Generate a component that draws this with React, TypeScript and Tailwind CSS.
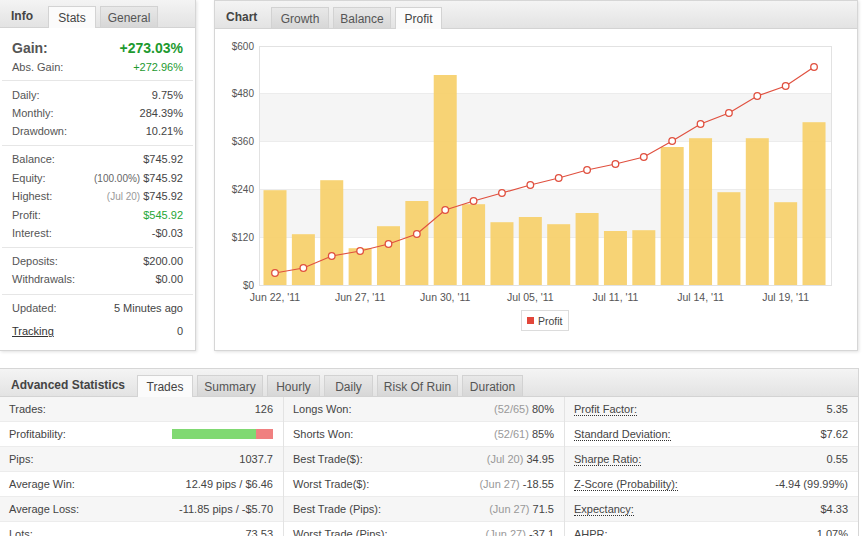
import React from "react";

const font = { fontFamily: '"Liberation Sans", Arial, sans-serif' };

type TabProps = { label: string; active?: boolean; w: string };

const Tab = ({ label, active, w }: TabProps) => (
  <div
    className={
      active
        ? `${w} h-[22px] -mb-px pt-[1px] flex items-center justify-center bg-[#fbfbfb] border border-b-0 border-[#d3d3d3] text-[12px] text-[#444]`
        : `${w} h-[21px] pt-[1px] flex items-center justify-center bg-linear-to-b from-[#e8e8e8] to-[#d7d7d7] border border-b-0 border-[#d2d2d2] text-[12px] text-[#555]`
    }
  >
    {label}
  </div>
);

const Header = ({ title, tw, children }: { title: string; tw: string; children: React.ReactNode }) => (
  <div className="h-[28px] flex items-end bg-linear-to-b from-[#f4f4f4] to-[#e3e3e3] border-b border-[#d3d3d3]">
    <div className={`${tw} h-full flex items-center pt-[5px] pl-[11px] font-bold text-[12px] text-[#444]`}>{title}</div>
    <div className="flex gap-[4px]">{children}</div>
  </div>
);

const Row = ({ label, children, h = "h-[18px]", big }: { label: React.ReactNode; children: React.ReactNode; h?: string; big?: boolean }) => (
  <div className={`${h} flex items-center justify-between`}>
    <span className={big ? "text-[14px] font-bold text-[#555]" : "text-[11px] text-[#555]"}>{label}</span>
    <span className={big ? "text-[14px] font-bold" : "text-[11px] text-[#444]"}>{children}</span>
  </div>
);

const Sep = () => <div className="mx-[2px] h-px bg-[#e6e6e6]" />;

const InfoPanel = () => (
  <div className="w-[196px] h-[351px] bg-white border border-l-0 border-t-0 border-[#d6d6d6] shadow-[1px_1px_3px_rgba(0,0,0,0.12)]">
    <Header title="Info" tw="w-[48px]">
      <Tab label="Stats" active w="w-[48px]" />
      <Tab label="General" w="w-[58px]" />
    </Header>
    <div className="px-[12px] pt-[10px] pb-[4px]">
      <Row label="Gain:" h="h-[20px]" big>
        <span className="text-[#1d9a2f]">+273.03%</span>
      </Row>
      <Row label="Abs. Gain:">
        <span className="text-[#1d9a2f]">+272.96%</span>
      </Row>
    </div>
    <Sep />
    <div className="px-[12px] py-[5px]">
      <Row label="Daily:">9.75%</Row>
      <Row label="Monthly:">284.39%</Row>
      <Row label="Drawdown:">10.21%</Row>
    </div>
    <Sep />
    <div className="px-[12px] pt-[4px] pb-[4px]">
      <Row label="Balance:" h="h-[18.5px]">$745.92</Row>
      <Row label="Equity:" h="h-[18.5px]">
        <span className="text-[10px] text-[#666]">(100.00%)</span> $745.92
      </Row>
      <Row label="Highest:" h="h-[18.5px]">
        <span className="text-[10px] text-[#999]">(Jul 20)</span> $745.92
      </Row>
      <Row label="Profit:" h="h-[18.5px]">
        <span className="text-[#25a636]">$545.92</span>
      </Row>
      <Row label="Interest:" h="h-[18.5px]">-$0.03</Row>
    </div>
    <Sep />
    <div className="px-[12px] py-[5px]">
      <Row label="Deposits:">$200.00</Row>
      <Row label="Withdrawals:">$0.00</Row>
    </div>
    <Sep />
    <div className="px-[12px] pt-[5px] flex flex-col gap-[5px]">
      <Row label="Updated:">5 Minutes ago</Row>
      <Row label={<span className="underline text-[#333]">Tracking</span>}>0</Row>
    </div>
  </div>
);

const bars = [237, 127, 262, 92, 147, 210, 525, 202, 157, 170, 152, 180, 135, 137, 345, 367, 232, 367, 207, 407];
const line = [273, 268, 256, 251, 244, 234, 210, 201, 193, 185, 178, 170, 164, 157, 141, 124, 113, 96, 86, 67];
const cx = (i: number) => 275 + i * 28.37;
const ticks = [
  { v: "$600", y: 46 },
  { v: "$480", y: 93 },
  { v: "$360", y: 141 },
  { v: "$240", y: 189 },
  { v: "$120", y: 237 },
  { v: "$0", y: 285 },
];
const xlabels = ["Jun 22, '11", "Jun 27, '11", "Jun 30, '11", "Jul 05, '11", "Jul 11, '11", "Jul 14, '11", "Jul 19, '11"];

const ProfitChart = () => (
  <svg width={642} height={321} viewBox="215 29 642 321" className="block" style={font}>
    <rect x={259} y={46} width={572} height={239} fill="#fff" />
    <rect x={259} y={93} width={572} height={48} fill="#f5f5f5" />
    <rect x={259} y={189} width={572} height={48} fill="#f5f5f5" />
    {[93, 141, 189, 237].map((y) => (
      <line key={y} x1={259} x2={831} y1={y + 0.5} y2={y + 0.5} stroke="#ececec" />
    ))}
    <rect x={259.5} y={46.5} width={572} height={239} fill="none" stroke="#e2e2e2" />
    {ticks.map((t) => (
      <text key={t.v} x={254} y={t.y + 3.5} textAnchor="end" fontSize={10} fill="#555">
        {t.v}
      </text>
    ))}
    {bars.map((v, i) => {
      const top = 285 - v * 0.4;
      return <rect key={i} x={cx(i) - 11.5} y={top} width={23} height={285 - top} fill="#f6d06a" fillOpacity={0.93} />;
    })}
    <polyline
      points={line.map((y, i) => `${cx(i)},${y}`).join(" ")}
      fill="none"
      stroke="#e0503f"
      strokeWidth={1.2}
    />
    {line.map((y, i) => (
      <circle key={i} cx={cx(i)} cy={y} r={3.3} fill="#fff" stroke="#e0503f" strokeWidth={1.3} />
    ))}
    {xlabels.map((l, k) => (
      <text key={l} x={cx(k * 3)} y={301} textAnchor="middle" fontSize={10.5} fill="#555">
        {l}
      </text>
    ))}
    <rect x={521.5} y={310.5} width={47} height={20} fill="#fff" stroke="#dcdcdc" />
    <rect x={527} y={317} width={7} height={7} fill="#e2463a" />
    <text x={538} y={324.5} fontSize={10.5} fill="#444">
      Profit
    </text>
  </svg>
);

const ChartPanel = () => (
  <div className="w-[644px] h-[351px] bg-white border border-[#d6d6d6] shadow-[1px_1px_3px_rgba(0,0,0,0.12)]">
    <Header title="Chart" tw="w-[56px]">
      <Tab label="Growth" w="w-[58px]" />
      <Tab label="Balance" w="w-[58px]" />
      <Tab label="Profit" active w="w-[47px]" />
    </Header>
    <ProfitChart />
  </div>
);

type Cell = { label: string; note?: string; value?: string; bar?: boolean };

const col1: Cell[] = [
  { label: "Trades:", value: "126" },
  { label: "Profitability:", bar: true },
  { label: "Pips:", value: "1037.7" },
  { label: "Average Win:", value: "12.49 pips / $6.46" },
  { label: "Average Loss:", value: "-11.85 pips / -$5.70" },
  { label: "Lots:", value: "73.53" },
];
const col2: Cell[] = [
  { label: "Longs Won:", note: "(52/65)", value: "80%" },
  { label: "Shorts Won:", note: "(52/61)", value: "85%" },
  { label: "Best Trade($):", note: "(Jul 20)", value: "34.95" },
  { label: "Worst Trade($):", note: "(Jun 27)", value: "-18.55" },
  { label: "Best Trade (Pips):", note: "(Jun 27)", value: "71.5" },
  { label: "Worst Trade (Pips):", note: "(Jun 27)", value: "-37.1" },
];
const col3: Cell[] = [
  { label: "Profit Factor:", value: "5.35" },
  { label: "Standard Deviation:", value: "$7.62" },
  { label: "Sharpe Ratio:", value: "0.55" },
  { label: "Z-Score (Probability):", value: "-4.94 (99.99%)" },
  { label: "Expectancy:", value: "$4.33" },
  { label: "AHPR:", value: "1.07%" },
];

const StatCol = ({ cells, w, dotted, last }: { cells: Cell[]; w: string; dotted?: boolean; last?: boolean }) => (
  <div className={`${w} flex flex-col ${last ? "" : "border-r border-[#e3e3e3]"}`}>
    {cells.map((c, i) => (
      <div
        key={c.label}
        className={`h-[25px] flex items-center justify-between pl-[9px] pr-[10px] text-[11px] text-[#444] border-b border-[#ececec] ${
          i % 2 === 0 ? "bg-[#f6f6f6]" : "bg-white"
        }`}
      >
        <span className={dotted ? "border-b border-dotted border-[#333] leading-[12px]" : ""}>{c.label}</span>
        {c.bar ? (
          <div className="flex w-[101px] h-[10px]">
            <div className="w-[84px] bg-[#80d972]" />
            <div className="flex-1 bg-[#f08080]" />
          </div>
        ) : (
          <span>
            {c.note && <span className="text-[#999]">{c.note} </span>}
            {c.value}
          </span>
        )}
      </div>
    ))}
  </div>
);

const AdvancedPanel = () => (
  <div className="w-[859px] bg-white border border-l-0 border-[#d6d6d6]">
    <Header title="Advanced Statistics" tw="w-[137px]">
      <Tab label="Trades" active w="w-[56px]" />
      <Tab label="Summary" w="w-[66px]" />
      <Tab label="Hourly" w="w-[53px]" />
      <Tab label="Daily" w="w-[49px]" />
      <Tab label="Risk Of Ruin" w="w-[81px]" />
      <Tab label="Duration" w="w-[61px]" />
    </Header>
    <div className="flex">
      <StatCol cells={col1} w="w-[284px]" />
      <StatCol cells={col2} w="w-[281px]" />
      <StatCol cells={col3} w="flex-1" dotted last />
    </div>
  </div>
);

export default function App() {
  return (
    <div className="w-[864px] h-[536px] overflow-hidden bg-white" style={font}>
      <div className="flex gap-[18px]">
        <InfoPanel />
        <ChartPanel />
      </div>
      <div className="mt-[17px]">
        <AdvancedPanel />
      </div>
    </div>
  );
}
